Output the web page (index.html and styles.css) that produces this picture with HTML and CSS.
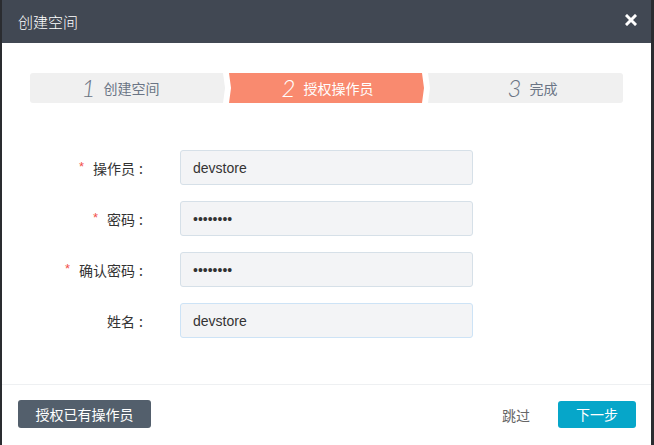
FILE: index.html
```html
<!DOCTYPE html>
<html lang="zh-CN">
<head>
<meta charset="utf-8">
<title>创建空间</title>
<link rel="stylesheet" href="styles.css">
</head>
<body>
<div class="modal">
  <div class="modal-header">
    <span class="modal-title">创建空间</span>
    <span class="close" aria-label="关闭">
      <svg width="12" height="12" viewBox="0 0 12 12"><path d="M2 2 L10 10 M10 2 L2 10" stroke="#fff" stroke-width="3" stroke-linecap="square"/></svg>
    </span>
  </div>
  <div class="modal-body">
    <div class="steps">
      <div class="step step-first"><span class="num">1</span><span class="step-text">创建空间</span></div>
      <div class="step step-mid active"><span class="num">2</span><span class="step-text">授权操作员</span></div>
      <div class="step step-last"><span class="num">3</span><span class="step-text">完成</span></div>
    </div>
    <div class="form">
      <label class="label"><span class="req">*</span>操作员<span class="colon">:</span></label>
      <input class="input" type="text" value="devstore">
      <label class="label"><span class="req">*</span>密码<span class="colon">:</span></label>
      <input class="input" type="password" value="devstore">
      <label class="label"><span class="req">*</span>确认密码<span class="colon">:</span></label>
      <input class="input" type="password" value="devstore">
      <label class="label">姓名<span class="colon">:</span></label>
      <input class="input input-focus" type="text" value="devstore">
    </div>
  </div>
  <div class="modal-footer">
    <button class="btn btn-dark">授权已有操作员</button>
    <div class="footer-right">
      <span class="skip">跳过</span>
      <button class="btn btn-primary">下一步</button>
    </div>
  </div>
</div>
</body>
</html>
```

FILE: styles.css
```css
html, body {
  margin: 0;
  padding: 0;
  background: #2a2c30;
  height: 445px;
  overflow: hidden;
}
body {
  font-family: "Noto Sans CJK SC", "Liberation Sans", sans-serif;
}
.modal {
  margin-left: 2px;
  width: 649px;
  height: 445px;
  background: #fff;
  display: flex;
  flex-direction: column;
}
.modal-header {
  height: 43px;
  background: #414853;
  display: flex;
  align-items: center;
  justify-content: space-between;
  padding: 0 14px 0 16px;
  flex-shrink: 0;
}
.modal-title {
  color: #fff;
  font-size: 15px;
  font-weight: 300;
}
.close {
  display: flex;
  width: 12px;
  height: 12px;
  margin-top: -4px;
}
.modal-body {
  height: 341px;
  box-sizing: border-box;
  padding: 30px 28px 0 28px;
}
.steps {
  display: flex;
  gap: 2px;
  height: 30px;
}
.step {
  width: 197px;
  height: 30px;
  background: #f0f0f0;
  color: #6b7585;
  display: flex;
  align-items: center;
  justify-content: center;
  box-sizing: border-box;
}
.step-first {
  border-radius: 3px 0 0 3px;
  padding-right: 16px;
  clip-path: polygon(0 0, calc(100% - 4px) 0, calc(100% - 2px) 50%, calc(100% - 4px) 100%, 0 100%);
}
.step-mid {
  clip-path: polygon(0 0, calc(100% - 4px) 0, calc(100% - 2px) 50%, calc(100% - 4px) 100%, 0 100%, 2px 50%);
}
.step-last {
  width: 195px;
  border-radius: 0 3px 3px 0;
  padding-left: 14px;
  clip-path: polygon(0 0, 100% 0, 100% 100%, 0 100%, 2px 50%);
}
.step.active {
  background: #f98a6f;
  color: #fff;
}
.num {
  font-family: "Lato", "Liberation Sans", sans-serif;
  font-weight: 300;
  font-style: italic;
  font-size: 24px;
  line-height: 1;
  margin-right: 8px;
}
.step-text {
  font-size: 14px;
}
.form {
  margin-top: 47px;
  margin-left: -28px;
  display: grid;
  grid-template-columns: 141px 293px;
  column-gap: 37px;
  row-gap: 16px;
  align-items: center;
}
.label {
  text-align: right;
  font-size: 14px;
  color: #333;
  display: flex;
  justify-content: flex-end;
  align-items: center;
}
.req {
  color: #f2504b;
  font-family: "Liberation Sans", sans-serif;
  font-size: 13px;
  margin-right: 9px;
  margin-top: -2px;
}
.colon {
  margin-left: 4px;
}
.input {
  height: 35px;
  box-sizing: border-box;
  border: 1px solid #d6e0e8;
  border-radius: 3px;
  background: #f3f4f6;
  padding: 0 12px;
  font-family: "Liberation Sans", Arial, sans-serif;
  font-size: 14px;
  color: #333;
  outline: none;
  width: 293px;
}
.input-focus {
  border-color: #cde3f6;
}
.modal-footer {
  border-top: 1px solid #eef0f2;
  display: flex;
  justify-content: space-between;
  align-items: flex-start;
  padding: 15px 15px 0 16px;
  flex: 1;
}
.footer-right {
  display: flex;
  align-items: center;
  margin-top: 1px;
}
.btn {
  border: none;
  border-radius: 3px;
  height: 27px;
  padding: 0;
  text-align: center;
  white-space: nowrap;
  font-family: "Noto Sans CJK SC", sans-serif;
  font-size: 14px;
  color: #fff;
  line-height: 27px;
}
.btn-dark {
  background: #535f6c;
  width: 133px;
  height: 28px;
}
.btn-primary {
  background: #06a6c9;
  width: 78px;
}
.skip {
  color: #666;
  font-size: 14px;
  margin-right: 28px;
}
```
